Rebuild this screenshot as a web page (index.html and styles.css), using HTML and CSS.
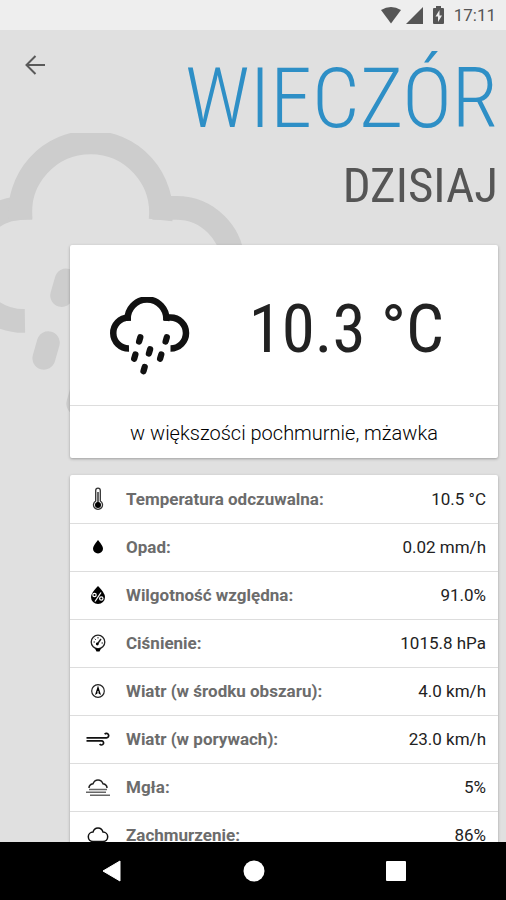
FILE: index.html
```html
<!DOCTYPE html>
<html lang="pl">
<head>
    <meta charset="UTF-8">
    <meta name="viewport" content="width=device-width, initial-scale=1.0">
    <title>Wieczór - dzisiaj</title>
    <link rel="stylesheet" href="styles.css">
</head>
<body>

    <!-- Shared weather symbol -->
    <svg class="symbols" aria-hidden="true">
        <symbol id="drizzle" viewBox="-38 0 82 80">
            <g fill="none" stroke="currentColor" stroke-width="6.5">
                <path d="M-18 51.500A15.500 15.500 0 0 1-18.500 20.500H-16"/>
                <path d="M-19.200 23.800A19.300 19.300 0 1 1 19.200 23.800"/>
                <path d="M17 20.500H23.500A15.500 15.500 0 0 1 23.500 51.500"/>
            </g>
            <path fill="none" stroke="currentColor" stroke-width="6.3" stroke-linecap="round" d="M-6.700 40.300l-1.200 4.200M19.800 40.300l-1.200 4.200M3.100 52.300l-1.200 4.200M-11.600 57.500l-1.200 4.200M14.300 57.500l-1.200 4.200M-2.300 70l-1.200 4.200"/>
        </symbol>
    </svg>

    <div class="status-bar">
        <svg width="20" height="17" viewBox="0 0 20 17"><path d="M0 3Q10-3 20 3L10 16.500z"/></svg>
        <svg width="17" height="17" viewBox="0 0 17 17"><path d="M17 0V17H0z"/></svg>
        <svg class="battery" width="11" height="18" viewBox="0 0 11 18"><path d="M3 0h5v2h2q1 0 1 1v14q0 1-1 1H1q-1 0-1-1V3q0-1 1-1h2z"/><path fill="#eee" d="M6.500 4L2.500 10.500H5V16l4-6.500H6.500z"/></svg>
        <span class="clock">17:11</span>
    </div>

    <main class="screen">
        <svg class="backdrop"><use href="#drizzle"/></svg>

        <header class="header">
            <button class="back" type="button" aria-label="Wstecz">
                <svg width="20" height="20" viewBox="0 0 20 20" fill="none" stroke="#5a5a5a" stroke-width="2"><path d="M20 10H2M10.500 1L1.500 10l9 9"/></svg>
            </button>
            <div class="titles">
                <h1>WIECZÓR</h1>
                <h2>DZISIAJ</h2>
            </div>
        </header>

        <section class="card summary">
            <div class="current">
                <svg class="weather"><use href="#drizzle"/></svg>
                <div class="temperature">10.3 °C</div>
            </div>
            <p class="description">w większości pochmurnie, mżawka</p>
        </section>

        <section class="card">
            <table class="details">
                <tr>
                    <td class="icon"><svg width="24" height="24" viewBox="0 0 24 24"><path fill="none" stroke="#333" stroke-width="1.300" d="M9.700 14V3.500a2.300 2.300 0 0 1 4.600 0V14a4.500 4.500 0 1 1-4.600 0z"/><path stroke="#333" stroke-width="1.500" d="M12 5v12"/><circle cx="12" cy="18" r="3"/></svg></td>
                    <th scope="row">Temperatura odczuwalna:</th>
                    <td class="value">10.5 °C</td>
                </tr>
                <tr>
                    <td class="icon"><svg width="24" height="24" viewBox="0 0 24 24"><path d="M12 5Q17 11 17 13.500a5 5 0 0 1-10 0Q7 11 12 5z"/></svg></td>
                    <th scope="row">Opad:</th>
                    <td class="value">0.02 mm/h</td>
                </tr>
                <tr>
                    <td class="icon"><svg width="24" height="24" viewBox="0 0 24 24"><path d="M12 3Q19 10 19 14a7 7 0 0 1-14 0Q5 10 12 3z"/><path fill="none" stroke="#fff" stroke-width="1.300" d="M15 9.500l-6 9"/><circle cx="8.500" cy="12" r="1.700" fill="none" stroke="#fff" stroke-width="1.200"/><circle cx="15.300" cy="15.500" r="1.700" fill="none" stroke="#fff" stroke-width="1.200"/></svg></td>
                    <th scope="row">Wilgotność względna:</th>
                    <td class="value">91.0%</td>
                </tr>
                <tr>
                    <td class="icon"><svg width="24" height="24" viewBox="0 0 24 24"><circle cx="12" cy="11" r="6.800" fill="none" stroke="#222" stroke-width="1.300"/><path d="M9 17.500h6l-1.500 3h-3z"/><path stroke="#222" stroke-width="1.400" d="M11 13.500L15 8"/><circle cx="11.300" cy="13" r="1.400"/><path stroke="#222" d="M7.500 11h1.500M12 6v1.500M8.800 7.800l1 1M15.500 12h1.500"/></svg></td>
                    <th scope="row">Ciśnienie:</th>
                    <td class="value">1015.8 hPa</td>
                </tr>
                <tr>
                    <td class="icon"><svg width="24" height="24" viewBox="0 0 24 24"><circle cx="12" cy="12" r="6.300" fill="none" stroke="#222" stroke-width="1.200"/><path d="M12 6.500l3 9.500-3-1.700L9 16z"/><path stroke="#fff" d="M12 12v3"/></svg></td>
                    <th scope="row">Wiatr (w środku obszaru):</th>
                    <td class="value">4.0 km/h</td>
                </tr>
                <tr>
                    <td class="icon"><svg width="24" height="24" viewBox="0 0 24 24"><path fill="none" stroke="#111" stroke-width="1.700" d="M.500 10.800H20.500a2.200 2.200 0 1 0-1.800-3.500M.500 13.800H15.500a2.100 2.100 0 1 1-1.800 3.200"/></svg></td>
                    <th scope="row">Wiatr (w porywach):</th>
                    <td class="value">23.0 km/h</td>
                </tr>
                <tr>
                    <td class="icon"><svg width="24" height="24" viewBox="0 0 24 24"><path fill="none" stroke="#222" stroke-width="1.500" d="M3 13q0-3.500 4-4.200Q8.500 5 12 5t5 3.800q4 .700 4 4.200"/><path stroke="#666" stroke-width="1.400" d="M3 14.500h18M0 17.300h20M4 20.200h20"/></svg></td>
                    <th scope="row">Mgła:</th>
                    <td class="value">5%</td>
                </tr>
                <tr>
                    <td class="icon"><svg width="24" height="24" viewBox="0 0 24 24"><path fill="none" stroke="#111" stroke-width="1.500" d="M7 18.500a4.700 4.700 0 0 1 0-9.400Q8 5 12 5t5 4.100a4.700 4.700 0 0 1 0 9.400z"/></svg></td>
                    <th scope="row">Zachmurzenie:</th>
                    <td class="value">86%</td>
                </tr>
            </table>
        </section>
    </main>

    <nav class="nav-bar">
        <button type="button" aria-label="Wstecz"><svg width="20" height="22" viewBox="0 0 20 22"><path d="M18 1v20L1 11z" stroke="#fff" stroke-linejoin="round"/></svg></button>
        <button type="button" aria-label="Ekran główny"><svg width="22" height="22" viewBox="0 0 22 22"><circle cx="11" cy="11" r="10.500"/></svg></button>
        <button type="button" aria-label="Ostatnie"><svg width="20" height="20" viewBox="0 0 20 20"><rect width="20" height="20" rx="1"/></svg></button>
    </nav>

</body>
</html>
```
FILE: styles.css
```css
/* General Styles */
* {
    box-sizing: border-box;
}

body {
    margin: 0;
    height: 100vh;
    display: flex;
    flex-direction: column;
    overflow: hidden;
    background: #e0e0e0;
    color: #222;
    font-family: Roboto, sans-serif;
    font-size: 17px;
}

svg {
    display: block;
}

button {
    display: flex;
    padding: 0;
    border: none;
    background: none;
    cursor: pointer;
}

.symbols {
    position: absolute;
    width: 0;
    height: 0;
}

/* Status bar */
.status-bar {
    flex: none;
    display: flex;
    align-items: center;
    justify-content: flex-end;
    gap: 5px;
    height: 30px;
    padding-right: 10px;
    background: #eee;
    color: #555;
    fill: #555;
}

.battery {
    margin: 0 5px;
}

/* Screen */
.screen {
    flex: 1;
    min-height: 0;
    position: relative;
    overflow: hidden;
    padding: 0 8px 0 70px;
}

/* Oversized weather symbol behind the cards */
.backdrop {
    position: absolute;
    left: -48px;
    top: 103px;
    width: 299px;
    height: 292px;
    color: #cdcdcd;
}

.header {
    position: relative;
    display: flex;
    justify-content: space-between;
    align-items: flex-start;
    height: 215px;
    margin-left: -70px;
    padding: 25px 0 0 25px;
}

.titles {
    text-align: right;
    font-family: "Roboto Condensed", Roboto, sans-serif;
}

h1 {
    margin: 0;
    font-size: 84px;
    font-weight: 300;
    line-height: 88px;
    color: #2e8fc6;
}

h2 {
    margin: 13px 0 0;
    font-size: 49px;
    font-weight: 400;
    line-height: 60px;
    color: #555;
}

/* Cards */
.card {
    position: relative;
    margin-bottom: 17px;
    background: #fff;
    border-radius: 2px;
    box-shadow: 0 1px 3px rgba(0, 0, 0, 0.3);
}

.current {
    display: flex;
    align-items: center;
    height: 161px;
    padding: 8px 54px 0 39px;
    border-bottom: 1px solid #ddd;
}

.weather {
    width: 82px;
    height: 80px;
    margin-top: 16px;
    color: #111;
}

.temperature {
    flex: 1;
    text-align: right;
    font-family: "Roboto Condensed", Roboto, sans-serif;
    font-size: 67px;
    color: #222;
}

.description {
    margin: 0;
    padding-top: 2px;
    font-size: 20px;
    font-weight: 300;
    line-height: 50px;
    text-align: center;
    color: #000;
}

/* Details */
.details {
    width: 100%;
    border-collapse: collapse;
}

.details tr {
    height: 48px;
    border-bottom: 1px solid #ddd;
}

.details th,
.details td {
    padding: 0;
}

.details th {
    font-weight: 700;
    text-align: left;
    color: #6c6c6c;
}

.details .icon {
    width: 56px;
    padding-left: 16px;
}

.details .value {
    padding-right: 12px;
    text-align: right;
}

/* Navigation bar */
.nav-bar {
    flex: none;
    display: grid;
    grid-template-columns: repeat(3, 1fr);
    height: 58px;
    padding: 0 39px 0 41px;
    background: #000;
    fill: #fff;
}

.nav-bar button {
    align-items: center;
    justify-content: center;
}
```
